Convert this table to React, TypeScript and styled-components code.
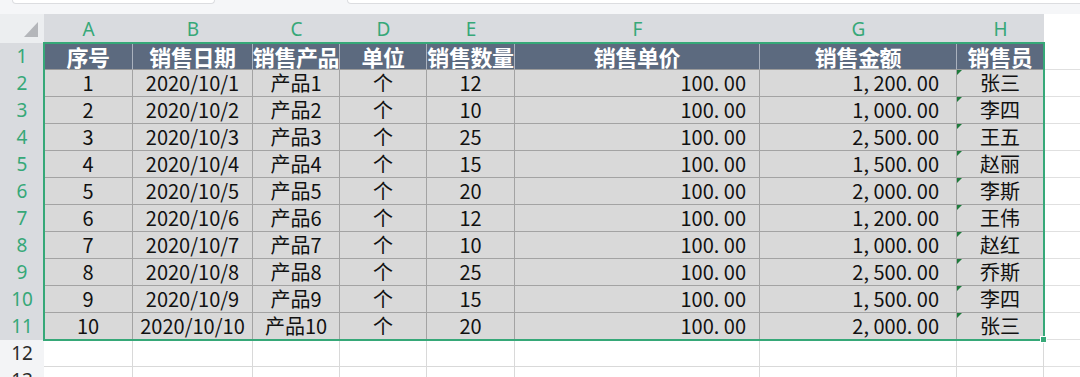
import React from "react";
import styled, { createGlobalStyle, css } from "styled-components";

const GlobalStyle = createGlobalStyle`
  html, body {
    margin: 0;
    padding: 0;
    background: #ffffff;
    overflow: hidden;
  }
  body {
    font-family: "Noto Sans CJK SC", "Noto Sans", sans-serif;
  }
`;

const COLS = "44px 89px 120px 87px 87px 88px 245px 197px 87px 1fr";
const GREEN = "#36a878";

const Page = styled.div`
  width: 1080px;
  height: 377px;
  overflow: hidden;
  display: flex;
  flex-direction: column;
  background: #ffffff;
`;

const TopStrip = styled.div`
  height: 14px;
  flex: none;
  display: flex;
  align-items: flex-start;
  background: #f5f6f8;
  overflow: hidden;
`;

const InputBox = styled.div<{ $left: number; $width?: number }>`
  height: 3px;
  margin-left: ${(p) => p.$left}px;
  ${(p) => (p.$width ? css`width: ${p.$width}px;` : css`flex: 1; margin-right: -8px;`)}
  background: #ffffff;
  border: 1px solid #dcdde0;
  border-top: none;
  border-radius: 0 0 5px 5px;
`;

const Sheet = styled.div`
  position: relative;
  flex: 1;
  display: flex;
  flex-direction: column;
`;

const Row = styled.div<{ $h: number }>`
  display: grid;
  grid-template-columns: ${COLS};
  height: ${(p) => p.$h}px;
  flex: none;
`;

const Corner = styled.div`
  background: #eceef0;
  display: flex;
  align-items: flex-end;
  justify-content: flex-end;
  padding: 0 6px 6px 0;
`;

const CornerTriangle = styled.div`
  width: 0;
  height: 0;
  border-left: 14px solid transparent;
  border-bottom: 15px solid #b4b6ba;
`;

const ColHeader = styled.div<{ $blank?: boolean }>`
  background: ${(p) => (p.$blank ? "#ffffff" : "#d9dbdf")};
  color: ${GREEN};
  font-family: "Noto Sans", "Liberation Sans", sans-serif;
  font-size: 19px;
  line-height: 1.2;
  display: flex;
  align-items: center;
  justify-content: center;
  padding-top: 1px;
`;

const RowHeader = styled.div<{ $selected?: boolean }>`
  background: ${(p) => (p.$selected ? "#d9dbdf" : "#f3f4f6")};
  color: ${(p) => (p.$selected ? GREEN : "#2b2b2b")};
  font-family: "Noto Sans", "Liberation Sans", sans-serif;
  font-size: 19px;
  line-height: 1.1;
  display: flex;
  align-items: center;
  justify-content: center;
`;

type Kind = "head" | "data" | "empty" | "filler";

const Cell = styled.div<{ $kind: Kind; $align?: "center" | "right"; $pad?: number; $flag?: boolean }>`
  position: relative;
  display: flex;
  align-items: center;
  justify-content: ${(p) => (p.$align === "right" ? "flex-end" : "center")};
  padding-right: ${(p) => p.$pad ?? 0}px;
  white-space: nowrap;
  line-height: 1;
  box-sizing: border-box;
  min-width: 0;
  ${(p) =>
    p.$kind === "head"
      ? css`
          background: #5c6a7f;
          color: #ffffff;
          font-weight: 700;
          font-size: 22px;
          letter-spacing: -0.4px;
          border-right: 1px solid #aab2be;
          border-bottom: 1px solid #9a9a9a;
        `
      : p.$kind === "data"
      ? css`
          background: #d9d9d9;
          color: #111111;
          font-size: 20px;
          border-right: 1px solid #a3a3a3;
          border-bottom: 1px solid #a3a3a3;
        `
      : p.$kind === "empty"
      ? css`
          background: #ffffff;
          border-right: 1px solid #d9d9d9;
          border-bottom: 1px solid #d9d9d9;
        `
      : css`
          background: #ffffff;
          border-bottom: 1px solid #e0e0e0;
        `}
  ${(p) =>
    p.$flag &&
    css`
      &::before {
        content: "";
        position: absolute;
        top: 0;
        left: 0;
        width: 0;
        height: 0;
        border-top: 5px solid #1e7b3c;
        border-right: 5px solid transparent;
      }
    `}
`;

const Selection = styled.div`
  position: absolute;
  left: 43px;
  top: 28px;
  width: 1002px;
  height: 299px;
  box-sizing: border-box;
  border: 2px solid ${GREEN};
  pointer-events: none;
`;

const Handle = styled.div`
  position: absolute;
  right: -4px;
  bottom: -4px;
  width: 5px;
  height: 5px;
  background: ${GREEN};
  border: 1px solid #ffffff;
`;

const letters = ["A", "B", "C", "D", "E", "F", "G", "H"];
const headers = ["序号", "销售日期", "销售产品", "单位", "销售数量", "销售单价", "销售金额", "销售员"];

const qty = [12, 10, 25, 15, 20, 12, 10, 25, 15, 20];
const amount = [
  "1, 200. 00",
  "1, 000. 00",
  "2, 500. 00",
  "1, 500. 00",
  "2, 000. 00",
  "1, 200. 00",
  "1, 000. 00",
  "2, 500. 00",
  "1, 500. 00",
  "2, 000. 00",
];
const people = ["张三", "李四", "王五", "赵丽", "李斯", "王伟", "赵红", "乔斯", "李四", "张三"];

const rows = qty.map((q, i) => ({
  id: i + 1,
  date: `2020/10/${i + 1}`,
  product: `产品${i + 1}`,
  unit: "个",
  qty: q,
  price: "100. 00",
  amount: amount[i],
  person: people[i],
}));

export default function App() {
  return (
    <Page>
      <GlobalStyle />
      <TopStrip>
        <InputBox $left={12} $width={201} />
        <InputBox $left={132} />
      </TopStrip>
      <Sheet>
        <Row $h={29}>
          <Corner>
            <CornerTriangle />
          </Corner>
          {letters.map((l) => (
            <ColHeader key={l}>{l}</ColHeader>
          ))}
          <ColHeader $blank />
        </Row>

        <Row $h={27}>
          <RowHeader $selected>1</RowHeader>
          {headers.map((h) => (
            <Cell key={h} $kind="head">
              {h}
            </Cell>
          ))}
          <Cell $kind="filler" />
        </Row>

        {rows.map((r) => (
          <Row $h={27} key={r.id}>
            <RowHeader $selected>{r.id + 1}</RowHeader>
            <Cell $kind="data">{r.id}</Cell>
            <Cell $kind="data">{r.date}</Cell>
            <Cell $kind="data">{r.product}</Cell>
            <Cell $kind="data">{r.unit}</Cell>
            <Cell $kind="data">{r.qty}</Cell>
            <Cell $kind="data" $align="right" $pad={13}>
              {r.price}
            </Cell>
            <Cell $kind="data" $align="right" $pad={17}>
              {r.amount}
            </Cell>
            <Cell $kind="data" $flag>
              {r.person}
            </Cell>
            <Cell $kind="filler" />
          </Row>
        ))}

        {[12, 13].map((n) => (
          <Row $h={27} key={n}>
            <RowHeader>{n}</RowHeader>
            {letters.map((l) => (
              <Cell key={l} $kind="empty" />
            ))}
            <Cell $kind="filler" />
          </Row>
        ))}

        <Selection>
          <Handle />
        </Selection>
      </Sheet>
    </Page>
  );
}
